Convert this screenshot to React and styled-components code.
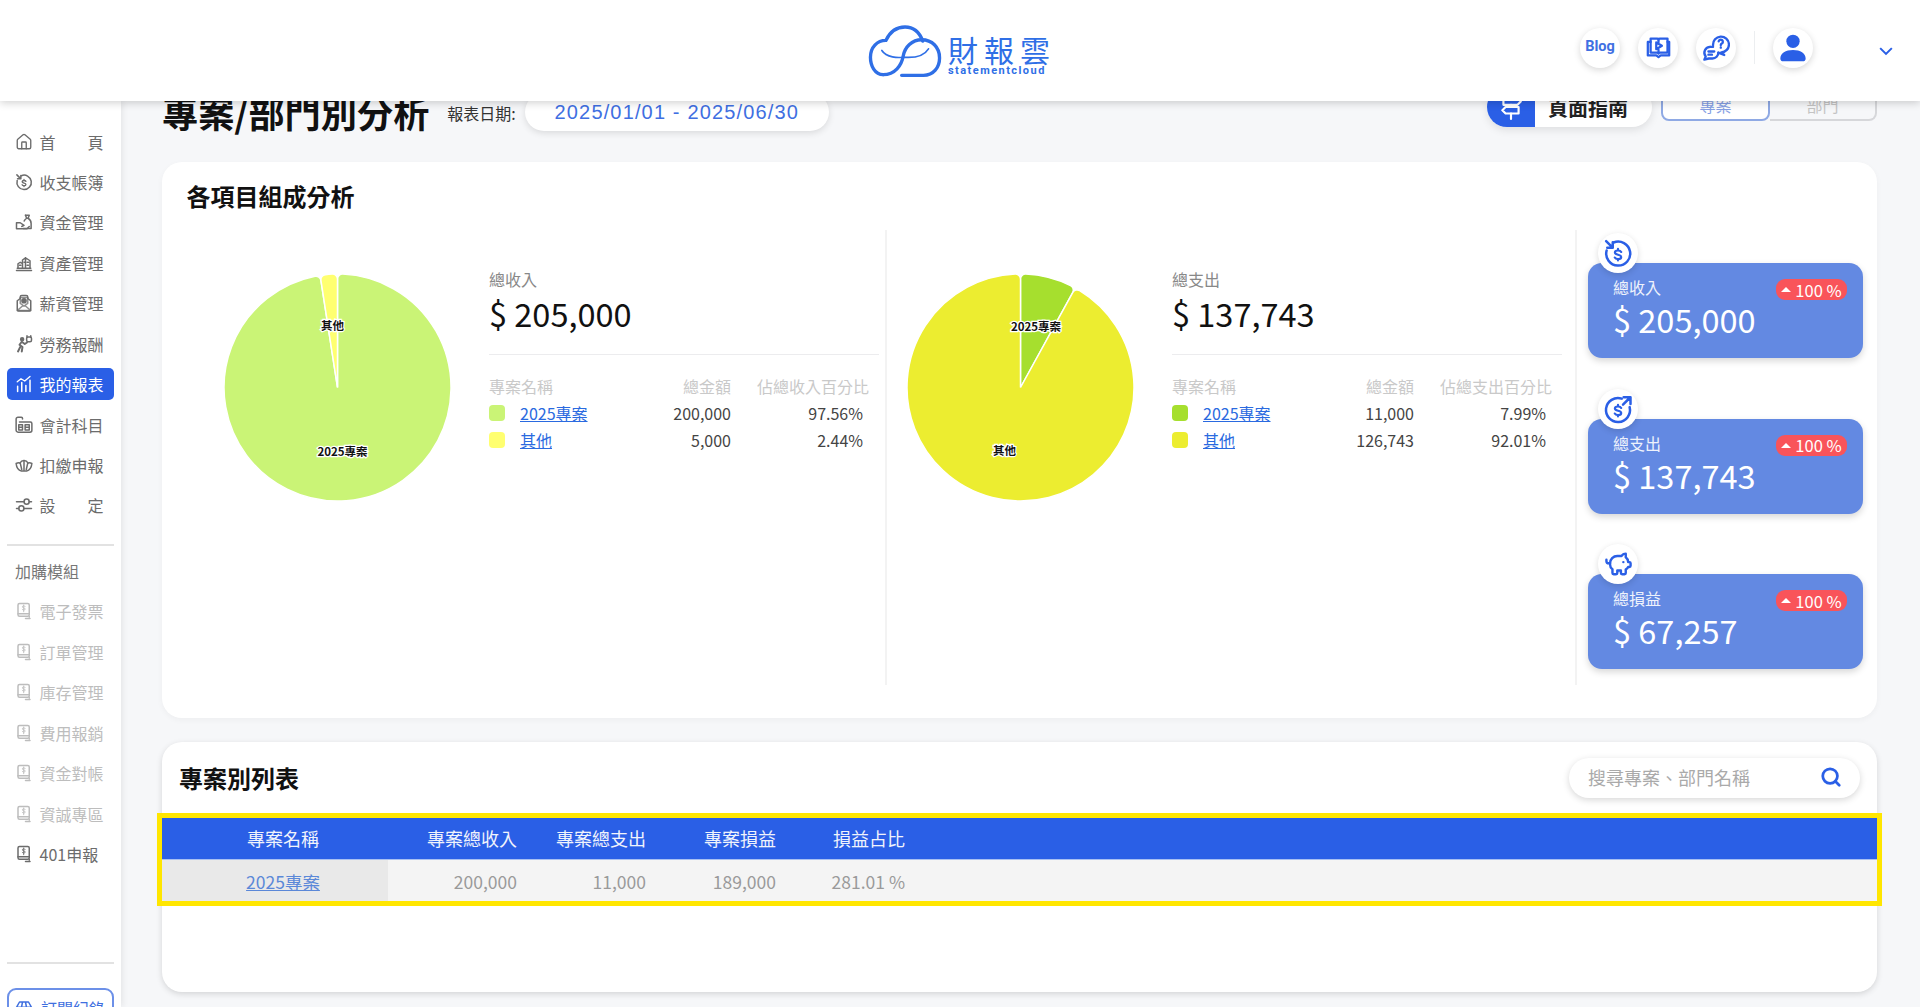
import React from 'react';
import styled, { createGlobalStyle } from 'styled-components';
import { House, PiggyBank, Search } from 'lucide-react';

const BLUE = '#2a5fe6';

const Global = createGlobalStyle`
  html, body, #root { margin: 0; height: 100%; }
  body {
    overflow: hidden;
    background: #f6f7f9;
    font-family: "Noto Sans CJK TC", "Noto Sans", sans-serif;
    color: #222;
  }
  * { box-sizing: border-box; }
`;

const Page = styled.div`
  display: flex;
  flex-direction: column;
  height: 1007px;
  overflow: hidden;
`;

const Header = styled.header`
  position: relative;
  z-index: 10;
  flex: none;
  height: 101px;
  display: grid;
  grid-template-columns: 1fr auto 1fr;
  align-items: center;
  background: #fff;
  box-shadow: 0 2px 8px rgba(0, 0, 0, 0.18);
`;

const Logo = styled.div`
  grid-column: 2;
  display: flex;
  align-items: center;
  gap: 6px;
  margin-left: -2px;
  color: #2f6fe6;
`;

const LogoWords = styled.div`
  display: flex;
  flex-direction: column;
  width: 102px;
  margin-top: 9px;
`;

const LogoTitle = styled.span`
  font-size: 30px;
  line-height: 32px;
  letter-spacing: 6px;
  white-space: nowrap;
`;

const LogoSub = styled.span`
  font-family: Roboto, sans-serif;
  font-size: 11px;
  line-height: 12px;
  font-weight: 700;
  letter-spacing: 1.45px;
  white-space: nowrap;
`;

const HeaderTools = styled.div`
  grid-column: 3;
  display: flex;
  align-items: center;
  justify-content: flex-end;
  gap: 18px;
  padding: 0 24px 6px 0;
`;

const RoundButton = styled.div`
  width: 40px;
  height: 40px;
  flex: none;
  display: flex;
  align-items: center;
  justify-content: center;
  border-radius: 50%;
  background: #fff;
  color: ${BLUE};
  box-shadow: 0 2px 7px rgba(0, 0, 0, 0.16);
`;

const BlogLabel = styled.span`
  font-family: Roboto, sans-serif;
  font-size: 14.5px;
  font-weight: 700;
  margin-top: -2px;
  color: #3f70e2;
`;

const ToolDivider = styled.div`
  width: 1px;
  height: 33px;
  background: #eceef0;
`;

const Chevron = styled.svg`
  width: 20px;
  height: 20px;
  margin: 7px 0 0 45px;
  fill: none;
  stroke: ${BLUE};
  stroke-width: 2.4;
`;

const Shell = styled.div`
  flex: 1;
  display: flex;
  min-height: 0;
`;

const Sidebar = styled.aside`
  position: relative;
  z-index: 5;
  flex: none;
  width: 121px;
  padding: 24.5px 7px 0;
  display: flex;
  flex-direction: column;
  overflow: hidden;
  background: #fff;
  box-shadow: 2px 0 6px rgba(0, 0, 0, 0.07);
`;

const NavGroup = styled.nav`
  display: flex;
  flex-direction: column;
  gap: 8.44px;
`;

const NavItem = styled.div`
  height: 32px;
  display: flex;
  align-items: center;
  gap: 6.5px;
  padding: 0 8px;
  border-radius: 5px;
  font-size: 16px;
  white-space: nowrap;
  color: ${(p) => (p.$active ? '#fff' : p.$muted ? '#bdbdbd' : '#6c6c6c')};
  background: ${(p) => (p.$active ? BLUE : 'transparent')};
`;

const NavLabel = styled.span`
  width: 64px;
  display: flex;
  justify-content: space-between;
`;

const NavRule = styled.div`
  flex: none;
  height: 2px;
  margin-top: ${(p) => p.$top}px;
  background: #e2e2e2;
`;

const GroupTitle = styled.div`
  margin: 13px 0 12px;
  padding-left: 8px;
  font-size: 16px;
  line-height: 24px;
  color: #777;
`;

const SubscribeButton = styled.div`
  flex: none;
  height: 40px;
  margin-top: 24px;
  display: flex;
  align-items: center;
  gap: 8px;
  padding: 0 6px;
  border: 2px solid #6c90e8;
  border-radius: 9px;
  font-size: 16px;
  white-space: nowrap;
  color: #3f6fdf;
`;

const Icon = styled.svg`
  width: 18px;
  height: 18px;
  flex: none;
  fill: none;
  stroke: currentColor;
  stroke-width: 2;
  stroke-linecap: round;
  stroke-linejoin: round;
`;

const Main = styled.main`
  flex: 1;
  min-width: 0;
  padding: 0 43px 0 41px;
  overflow: hidden;
`;

const TitleRow = styled.div`
  display: flex;
  justify-content: space-between;
  align-items: flex-start;
  height: 45px;
  margin: -14px 0 30px;
`;

const TitleGroup = styled.div`
  display: flex;
  align-items: center;
  height: 40px;
  margin-top: 5px;
`;

const PageTitle = styled.h1`
  margin: 0 18px 0 0;
  font-size: 36.2px;
  line-height: 40px;
  font-weight: 700;
  color: #111;
  white-space: nowrap;
`;

const DateLabel = styled.span`
  font-size: 16px;
  color: #333;
  white-space: nowrap;
  margin-top: 2px;
`;

const DatePill = styled.div`
  width: 304px;
  height: 38px;
  margin: 0 0 0 9px;
  display: flex;
  align-items: center;
  justify-content: center;
  border-radius: 19px;
  background: #fff;
  box-shadow: 0 2px 7px rgba(0, 0, 0, 0.12);
  font-family: "Liberation Sans", sans-serif;
  font-size: 20px;
  letter-spacing: 1.15px;
  color: #3f6fe2;
  white-space: nowrap;
`;

const TitleTools = styled.div`
  display: flex;
  align-items: flex-end;
  gap: 9px;
  height: 40px;
`;

const GuidePill = styled.div`
  width: 165px;
  height: 40px;
  display: flex;
  align-items: center;
  border-radius: 20px;
  overflow: hidden;
  background: #fff;
  box-shadow: 0 3px 8px rgba(0, 0, 0, 0.1);
`;

const GuideIcon = styled.div`
  width: 48px;
  height: 100%;
  display: flex;
  align-items: center;
  justify-content: center;
  background: ${BLUE};
  color: #fff;
`;

const GuideText = styled.span`
  margin-left: 13px;
  font-size: 20px;
  font-weight: 700;
  color: #222;
  white-space: nowrap;
`;

const Toggle = styled.div`
  display: flex;
  width: 216px;
  height: 33px;
  margin-bottom: 6px;
`;

const ToggleTab = styled.div`
  flex: 1;
  display: flex;
  align-items: center;
  justify-content: center;
  font-size: 16px;
  border: 2px solid ${(p) => (p.$on ? '#8fa9e4' : '#d6d7da')};
  border-left-width: ${(p) => (p.$on ? 2 : 0)}px;
  border-radius: ${(p) => (p.$on ? '0 0 8px 8px' : '0 0 8px 0')};
  color: ${(p) => (p.$on ? '#86a0e4' : '#c4c4c4')};
  background: ${(p) => (p.$on ? '#fff' : 'transparent')};
`;

const Card = styled.section`
  background: #fff;
  border-radius: 20px;
  box-shadow: 0 2px 6px rgba(0, 0, 0, 0.04);
`;

const AnalysisCard = styled(Card)`
  height: 556px;
  padding: 16px 0 0 24.5px;
`;

const CardTitle = styled.h2`
  margin: 0;
  font-size: 24px;
  line-height: 36px;
  font-weight: 700;
  color: #111;
  white-space: nowrap;
`;

const AnalysisGrid = styled.div`
  display: grid;
  grid-template-columns: 700px 690.5px 1fr;
  height: 455px;
  margin-top: 16px;
`;

const BreakdownColumn = styled.div`
  display: flex;
  align-items: flex-start;
  gap: 38px;
  padding: 37px 0 0 ${(p) => p.$pad}px;
  border-right: 2px solid #f3f3f3;
`;

const PieChart = styled.svg`
  flex: none;
  width: 227px;
  height: 227px;
  margin-top: 6.5px;
  overflow: visible;
`;

const PieSlice = styled.path`
  stroke: #fff;
  stroke-width: 1.5;
`;

const PieLabel = styled.text`
  font-family: "Noto Sans CJK TC", sans-serif;
  font-size: 11.5px;
  font-weight: 700;
  text-anchor: middle;
  dominant-baseline: central;
  fill: #111;
  stroke: #fff;
  stroke-width: 2.5px;
  paint-order: stroke;
`;

const Breakdown = styled.div`
  width: 390px;
`;

const BreakdownLabel = styled.div`
  font-size: 16px;
  line-height: 24px;
  color: #888;
`;

const BreakdownValue = styled.div`
  font-size: 32.5px;
  line-height: 44px;
  color: #111;
`;

const BreakdownRule = styled.div`
  height: 1px;
  margin: 19px 0 18px;
  background: #ececee;
`;

const LegendRow = styled.div`
  display: grid;
  grid-template-columns: 162px 80px 138px;
  align-items: center;
  height: ${(p) => (p.$head ? 26 : 27)}px;
  font-size: 16px;
  white-space: nowrap;
  color: ${(p) => (p.$head ? '#c9c9c9' : '#444')};
`;

const LegendName = styled.div`
  display: flex;
  align-items: center;
  gap: 15px;
`;

const Swatch = styled.span`
  width: 16px;
  height: 16px;
  border-radius: 4px;
  background: ${(p) => p.$color};
`;

const TextLink = styled.a`
  color: ${(p) => p.$color || '#2a6ae0'};
  text-decoration: underline;
`;

const Amount = styled.div`
  text-align: right;
`;

const Share = styled.div`
  text-align: right;
  padding-right: ${(p) => (p.$head ? 0 : 6)}px;
`;

const KpiColumn = styled.div`
  display: flex;
  flex-direction: column;
  gap: 60.5px;
  padding: 33px 14px 0 11px;
`;

const KpiCard = styled.div`
  position: relative;
  height: 95px;
  padding: 12px 0 0 25px;
  border-radius: 14px;
  background: #6389e2;
  color: #fff;
  box-shadow: 0 3px 7px rgba(0, 0, 0, 0.16);
`;

const KpiIcon = styled.div`
  position: absolute;
  left: 10px;
  top: -30px;
  width: 40px;
  height: 40px;
  display: flex;
  align-items: center;
  justify-content: center;
  border-radius: 50%;
  background: #fff;
  color: ${BLUE};
  box-shadow: 0 2px 6px rgba(0, 0, 0, 0.14);
`;

const KpiLabel = styled.div`
  font-size: 16px;
  line-height: 24px;
  color: #eef2fc;
`;

const KpiValue = styled.div`
  font-size: 32.5px;
  line-height: 44px;
  margin-top: -2px;
`;

const KpiBadge = styled.div`
  position: absolute;
  top: 16px;
  right: 16px;
  width: 71px;
  height: 21px;
  display: flex;
  align-items: center;
  justify-content: center;
  gap: 4px;
  border-radius: 9px;
  background: #f9545a;
  font-size: 16.5px;
  white-space: nowrap;
`;

const BadgeArrow = styled.span`
  width: 0;
  height: 0;
  border-left: 5px solid transparent;
  border-right: 5px solid transparent;
  border-bottom: 5px solid #fff;
`;

const ListCard = styled(Card)`
  height: 250px;
  margin-top: 24px;
  padding-top: 16px;
  box-shadow: 0 2px 6px rgba(0, 0, 0, 0.14);
`;

const ListHeader = styled.div`
  display: flex;
  align-items: center;
  justify-content: space-between;
  height: 40px;
  padding: 0 17px;
  margin-bottom: 20px;
`;

const SearchBox = styled.div`
  width: 291px;
  height: 40px;
  display: flex;
  align-items: center;
  justify-content: space-between;
  padding: 0 18px 2px 19px;
  border-radius: 20px;
  background: #fff;
  box-shadow: 0 2px 7px rgba(0, 0, 0, 0.16);
  font-size: 18px;
  color: #aaa;
  white-space: nowrap;
`;

const Table = styled.table`
  width: 100%;
  table-layout: fixed;
  border-collapse: collapse;
  outline: 5px solid #ffe600;
  font-size: 18px;
`;

const HeadCell = styled.th`
  height: 41px;
  padding: 0;
  font-weight: 400;
  color: #f0f3fc;
  background: ${BLUE};
  border-bottom: 1px solid #a9c0f2;
  width: ${(p) => p.$w || 'auto'};
  text-align: ${(p) => (p.$name ? 'center' : 'right')};
  padding-left: ${(p) => (p.$name ? '16px' : 0)};
`;

const BodyCell = styled.td`
  height: 42px;
  padding: 2px 0 0;
  font-size: 17.5px;
  color: #9a9a9a;
  background: ${(p) => (p.$name ? '#e9e9e9' : '#f4f4f4')};
  text-align: ${(p) => (p.$name ? 'center' : 'right')};
  padding-left: ${(p) => (p.$name ? '16px' : 0)};
`;

const HomeIcon = () => <House size={18} strokeWidth={1.8} />;

const SmallDollar = () => (
  <path
    strokeWidth="2.2"
    d="M15.200 10.600c-.5-1-1.600-1.500-3.200-1.500-1.700 0-3.100.7-3.100 2.100 0 2.900 6.300 1.500 6.300 4.400 0 1.400-1.500 2.100-3.200 2.100-1.500 0-2.700-.5-3.200-1.500M12 7.500v1.600M12 17.600v1.500"
    transform="translate(2.400 2.700) scale(.8)"
  />
);

const CycleIn = (props) => (
  <Icon viewBox="0 0 24 24" {...props}>
    <path d="M8.500 3.600A9.600 9.600 0 1 1 2.900 10" />
    <path d="M2.500 2.500 7.500 7.500M7.800 3.400v4.400H3.400" />
    <SmallDollar />
  </Icon>
);

const CycleOut = (props) => (
  <Icon viewBox="0 0 24 24" {...props}>
    <path d="M15 3.700A9.600 9.600 0 1 0 21.300 10.500" />
    <path d="M16 8.500 21.500 3M16.500 2.500h5.500V8" />
    <SmallDollar />
  </Icon>
);

const FundIcon = () => (
  <Icon viewBox="0 0 24 24">
    <path d="M14 3h5l-1.500 4c2.500 1.500 4 4 4 7v6.500H11" />
    <path d="M14 3l1.500 4c-1.500 1-2.700 2.200-3.300 3.800M15.500 7h2" />
    <path d="M2 13h5l5 3.500-3 1.500M2 13v8h14l3-3" />
  </Icon>
);

const AssetIcon = () => (
  <Icon viewBox="0 0 24 24" strokeWidth="1.6">
    <path d="M2 22h20M3 19h18" />
    <path d="M4 19v-6l3-2 3 2v6M10 19V8l4-3 0 14M14 19V5l6 4v10" />
    <path d="M6 15h2M12 11h1M16 11h2M16 15h2" />
  </Icon>
);

const SalaryIcon = () => (
  <Icon viewBox="0 0 24 24" fill="currentColor" stroke="none">
    <path d="M3 9l4-3V4a2 2 0 0 1 2-2h6a2 2 0 0 1 2 2v2l4 3v12a1.500 1.500 0 0 1-1.500 1.500h-15A1.500 1.500 0 0 1 3 21z" />
    <path fill="#fff" d="M7 4.500h10v8l-5 3.500-5-3.500zM3 22l7-6h4l7 6z" opacity=".75" />
    <circle fill="currentColor" cx="12" cy="9" r="2.800" />
  </Icon>
);

const LaborIcon = () => (
  <Icon viewBox="0 0 24 24" strokeWidth="1.6">
    <circle cx="9.500" cy="5.500" r="2" fill="currentColor" />
    <path d="M9 9l-3 4 4 3-1 6M4 22l3-6M9 9l4 3 3-2" strokeWidth="2.600" />
    <rect x="15.500" y="2.500" width="6.500" height="6.500" rx="2" />
    <path d="M16 1v2M21 1v2" />
  </Icon>
);

const ReportIcon = () => (
  <Icon viewBox="0 0 24 24" strokeWidth="2.800" strokeLinecap="butt">
    <path d="M3.500 22v-7M9 22V10M14.500 22v-8M20 22V7" />
    <path d="M3 9l5-4 5 3 7-6" strokeWidth="1.800" />
  </Icon>
);

const LedgerIcon = () => (
  <Icon viewBox="0 0 24 24" strokeWidth="1.600">
    <path d="M10 4V3a1.500 1.500 0 0 0-1.500-1.500H4A2.500 2.500 0 0 0 1.500 4v15A2.500 2.500 0 0 0 4 21.500h16A2.500 2.500 0 0 0 22.500 19v-9A2 2 0 0 0 20.500 8H6" />
    <path d="M5 11.500h5v7H5zM13.500 11.500h5.500v7h-5.500zM5 15h5M13.500 15h5.500" />
  </Icon>
);

const WithholdIcon = () => (
  <Icon viewBox="0 0 24 24" strokeWidth="1.700">
    <path d="M1.500 10c2-1 4-1 5-.5C8 7 10 6 12 6s4 1 5.500 3.500c1-.5 3-.5 5 .5-.5 5-3 9-7 10H8.500c-4-1-6.500-5-7-10z" />
    <path d="M7 9.500 9 18M12 6v13M17 9.500 15 18" />
  </Icon>
);

const SettingsIcon = () => (
  <Icon viewBox="0 0 24 24">
    <path d="M2 7.500h10M19 7.500h3M2 16.500h3M12 16.500h10" />
    <circle cx="15.500" cy="7.500" r="3.400" />
    <circle cx="8.500" cy="16.500" r="3.400" />
  </Icon>
);

const ModuleIcon = () => (
  <Icon viewBox="0 0 24 24" strokeWidth="1.900">
    <rect x="4" y="2" width="15" height="17" rx="2" />
    <path d="M4 15.500h15" />
    <path d="M14 22h6M19 19v1" />
    <path d="M13.500 6c-.4-.6-1.100-.9-1.900-.9-1 0-1.800.5-1.800 1.400 0 1.800 3.800 1 3.800 2.800 0 .9-.9 1.400-2 1.400-.8 0-1.600-.4-2-1M11.600 4v9" strokeWidth="1.200" />
  </Icon>
);

const StoreIcon = () => (
  <Icon viewBox="0 0 24 24">
    <path d="M2 11 6 4h12l4 7zM2 11a3.300 3.300 0 0 0 6.700 0 3.300 3.300 0 0 0 6.600 0 3.300 3.300 0 0 0 6.700 0M8.700 11l1.300-7M15.300 11 14 4" />
  </Icon>
);

const SignIcon = () => (
  <Icon viewBox="0 0 24 24" style={{ width: 26, height: 26 }}>
    <path d="M12 1v3M12 10v2M12 18v5" />
    <path d="M5 4h13l3 3-3 3H5zM19 12H7l-3 3 3 3h12z" />
  </Icon>
);

const LogoCloud = () => (
  <svg width="74" height="52" viewBox="86 74 218 155" fill="none" stroke="currentColor" strokeLinecap="round">
    <path strokeWidth="10" d="M130 222C105 222 92 195 92 170 92 140 112 120 138 120 150 95 170 80 195 80 220 80 238 95 248 122" />
    <path strokeWidth="10" d="M185 224H250C280 224 298 200 298 172 298 140 275 118 245 118 215 118 195 140 190 165 185 195 165 222 130 222" />
    <path strokeWidth="5" d="M126 150C140 172 175 172 190 170 215 172 250 170 265 145" />
  </svg>
);

const BookPlayIcon = () => (
  <Icon viewBox="0 0 24 24" style={{ width: 27, height: 27 }} strokeWidth="1.300">
    <path d="M5 4h6c.6 0 1 .3 1 1 0-.7.4-1 1-1h7v12.500h-7c-.6 0-1 .3-1 1 0-.7-.4-1-1-1H5z" />
    <path d="M5 7H2.500v12h7.500l2 1.500 2-1.500h7.500V7H20" />
    <path d="M10 7.500l5 3-5 3zM12 4.500v3M12 14v3" />
  </Icon>
);

const HelpIcon = () => (
  <Icon viewBox="0 0 24 24" style={{ width: 28, height: 28 }} strokeWidth="1.300">
    <path d="M9.500 9.500A6.800 6.800 0 1 1 16.500 15.800L19 18l-5-2" />
    <path d="M14.300 6.300a1.800 1.800 0 1 1 2.700 1.900c-.6.3-.9.7-.9 1.300M16.100 11.600v.1" />
    <path d="M7 11a5 5 0 0 0-3.800 8.200L2 22l3.800-1H9a5 5 0 0 0 5-5" />
    <path d="M7 11h2.500M5.500 15h5M5.500 17.700h3" />
  </Icon>
);

const UserIcon = () => (
  <svg width="32" height="32" viewBox="0 0 24 24" fill="currentColor">
    <circle cx="12" cy="7" r="5" />
    <path d="M2.500 20c0-4 4-6.500 9.500-6.500s9.500 2.500 9.500 6.500c0 1.200-1 2-2.200 2H4.700c-1.200 0-2.200-.8-2.200-2z" />
  </svg>
);

const point = (radius, deg) => {
  const a = (deg * Math.PI) / 180;
  return `${(radius * Math.sin(a)).toFixed(2)} ${(-radius * Math.cos(a)).toFixed(2)}`;
};

const slicePath = (from, to, r = 113.5, c = 5) => {
  const delta = (Math.asin(c / (r - c)) * 180) / Math.PI;
  const d = Math.sqrt((r - c) ** 2 - c ** 2);
  const large = to - from - 2 * delta > 180 ? 1 : 0;
  return `M0 0L${point(d, from)}A${c} ${c} 0 0 1 ${point(r, from + delta)}A${r} ${r} 0 ${large} 1 ${point(
    r,
    to - delta
  )}A${c} ${c} 0 0 1 ${point(d, to)}Z`;
};

const breakdowns = [
  {
    pad: 37.5,
    label: '總收入',
    total: '$ 205,000',
    shareHead: '佔總收入百分比',
    slices: [
      { from: 0, to: 351.2, color: '#caf476' },
      { from: 351.2, to: 360, color: '#ffff70' },
    ],
    pieLabels: [
      { text: '其他', x: -5, y: -62.5 },
      { text: '2025專案', x: 5, y: 63 },
    ],
    rows: [
      { name: '2025專案', color: '#caf476', amount: '200,000', share: '97.56%' },
      { name: '其他', color: '#ffff70', amount: '5,000', share: '2.44%' },
    ],
  },
  {
    pad: 20.5,
    label: '總支出',
    total: '$ 137,743',
    shareHead: '佔總支出百分比',
    slices: [
      { from: 0, to: 28.8, color: '#a6df2e' },
      { from: 28.8, to: 360, color: '#eced30' },
    ],
    pieLabels: [
      { text: '2025專案', x: 15.5, y: -62 },
      { text: '其他', x: -16, y: 62 },
    ],
    rows: [
      { name: '2025專案', color: '#a6df2e', amount: '11,000', share: '7.99%' },
      { name: '其他', color: '#eced30', amount: '126,743', share: '92.01%' },
    ],
  },
];

const kpis = [
  { label: '總收入', value: '$ 205,000', icon: <CycleIn style={{ width: 30, height: 30 }} /> },
  { label: '總支出', value: '$ 137,743', icon: <CycleOut style={{ width: 30, height: 30 }} /> },
  { label: '總損益', value: '$ 67,257', icon: <PiggyBank size={29} strokeWidth={2} /> },
];

const primaryNav = [
  { icon: <HomeIcon />, label: ['首', '頁'] },
  { icon: <CycleIn />, label: ['收支帳簿'] },
  { icon: <FundIcon />, label: ['資金管理'] },
  { icon: <AssetIcon />, label: ['資產管理'] },
  { icon: <SalaryIcon />, label: ['薪資管理'] },
  { icon: <LaborIcon />, label: ['勞務報酬'] },
  { icon: <ReportIcon />, label: ['我的報表'], active: true },
  { icon: <LedgerIcon />, label: ['會計科目'] },
  { icon: <WithholdIcon />, label: ['扣繳申報'] },
  { icon: <SettingsIcon />, label: ['設', '定'] },
];

const moduleNav = ['電子發票', '訂單管理', '庫存管理', '費用報銷', '資金對帳', '資誠專區'];

const BreakdownBlock = ({ data }) => (
  <BreakdownColumn $pad={data.pad}>
    <PieChart viewBox="-113.5 -113.5 227 227">
      {data.slices.map((s) => (
        <PieSlice key={s.from} d={slicePath(s.from, s.to)} fill={s.color} />
      ))}
      {data.pieLabels.map((l) => (
        <PieLabel key={l.text} x={l.x} y={l.y}>
          {l.text}
        </PieLabel>
      ))}
    </PieChart>
    <Breakdown>
      <BreakdownLabel>{data.label}</BreakdownLabel>
      <BreakdownValue>{data.total}</BreakdownValue>
      <BreakdownRule />
      <LegendRow $head>
        <div>專案名稱</div>
        <Amount>總金額</Amount>
        <Share $head>{data.shareHead}</Share>
      </LegendRow>
      {data.rows.map((r) => (
        <LegendRow key={r.name}>
          <LegendName>
            <Swatch $color={r.color} />
            <TextLink>{r.name}</TextLink>
          </LegendName>
          <Amount>{r.amount}</Amount>
          <Share>{r.share}</Share>
        </LegendRow>
      ))}
    </Breakdown>
  </BreakdownColumn>
);

export default function App() {
  return (
    <Page>
      <Global />
      <Header>
        <Logo>
          <LogoCloud />
          <LogoWords>
            <LogoTitle>財報雲</LogoTitle>
            <LogoSub>statementcloud</LogoSub>
          </LogoWords>
        </Logo>
        <HeaderTools>
          <RoundButton>
            <BlogLabel>Blog</BlogLabel>
          </RoundButton>
          <RoundButton>
            <BookPlayIcon />
          </RoundButton>
          <RoundButton>
            <HelpIcon />
          </RoundButton>
          <ToolDivider />
          <RoundButton>
            <UserIcon />
          </RoundButton>
          <Chevron viewBox="0 0 24 24">
            <path d="M5 8.500l7 7 7-7" />
          </Chevron>
        </HeaderTools>
      </Header>
      <Shell>
        <Sidebar>
          <NavGroup>
            {primaryNav.map((item) => (
              <NavItem key={item.label.join('')} $active={item.active}>
                {item.icon}
                <NavLabel>
                  {item.label.map((t) => (
                    <span key={t}>{t}</span>
                  ))}
                </NavLabel>
              </NavItem>
            ))}
          </NavGroup>
          <NavRule $top={23} />
          <GroupTitle>加購模組</GroupTitle>
          <NavGroup>
            {moduleNav.map((label) => (
              <NavItem key={label} $muted>
                <ModuleIcon />
                <NavLabel>{label}</NavLabel>
              </NavItem>
            ))}
            <NavItem>
              <ModuleIcon />
              <NavLabel>401申報</NavLabel>
            </NavItem>
          </NavGroup>
          <NavRule $top={92} />
          <SubscribeButton>
            <StoreIcon />
            訂閱紀錄
          </SubscribeButton>
        </Sidebar>
        <Main>
          <TitleRow>
            <TitleGroup>
              <PageTitle>專案/部門別分析</PageTitle>
              <DateLabel>報表日期:</DateLabel>
              <DatePill>2025/01/01 - 2025/06/30</DatePill>
            </TitleGroup>
            <TitleTools>
              <GuidePill>
                <GuideIcon>
                  <SignIcon />
                </GuideIcon>
                <GuideText>頁面指南</GuideText>
              </GuidePill>
              <Toggle>
                <ToggleTab $on>專案</ToggleTab>
                <ToggleTab>部門</ToggleTab>
              </Toggle>
            </TitleTools>
          </TitleRow>
          <AnalysisCard>
            <CardTitle>各項目組成分析</CardTitle>
            <AnalysisGrid>
              {breakdowns.map((d) => (
                <BreakdownBlock key={d.label} data={d} />
              ))}
              <KpiColumn>
                {kpis.map((k) => (
                  <KpiCard key={k.label}>
                    <KpiIcon>{k.icon}</KpiIcon>
                    <KpiLabel>{k.label}</KpiLabel>
                    <KpiValue>{k.value}</KpiValue>
                    <KpiBadge>
                      <BadgeArrow />
                      100 %
                    </KpiBadge>
                  </KpiCard>
                ))}
              </KpiColumn>
            </AnalysisGrid>
          </AnalysisCard>
          <ListCard>
            <ListHeader>
              <CardTitle>專案別列表</CardTitle>
              <SearchBox>
                搜尋專案、部門名稱
                <Search size={22} strokeWidth={3} color={BLUE} />
              </SearchBox>
            </ListHeader>
            <Table>
              <thead>
                <tr>
                  <HeadCell $name $w="226px">專案名稱</HeadCell>
                  <HeadCell $w="129px">專案總收入</HeadCell>
                  <HeadCell $w="129px">專案總支出</HeadCell>
                  <HeadCell $w="130px">專案損益</HeadCell>
                  <HeadCell $w="129px">損益占比</HeadCell>
                  <HeadCell />
                </tr>
              </thead>
              <tbody>
                <tr>
                  <BodyCell $name>
                    <TextLink $color="#5b88d8">2025專案</TextLink>
                  </BodyCell>
                  <BodyCell>200,000</BodyCell>
                  <BodyCell>11,000</BodyCell>
                  <BodyCell>189,000</BodyCell>
                  <BodyCell>281.01 %</BodyCell>
                  <BodyCell />
                </tr>
              </tbody>
            </Table>
          </ListCard>
        </Main>
      </Shell>
    </Page>
  );
}
